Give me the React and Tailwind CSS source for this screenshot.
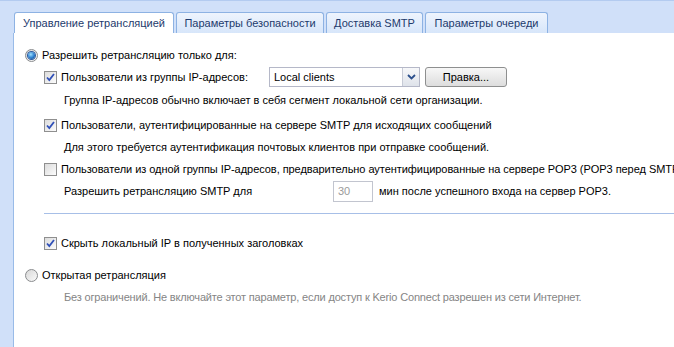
import React from "react";

const font = { fontFamily: '"Liberation Sans", Arial, sans-serif' };

const Radio = ({ checked }) => (
  <span className="relative w-[13px] h-[13px] rounded-full border border-[#8a8c8e] bg-gradient-to-br from-[#d8d8d8] to-[#fafafa] flex items-center justify-center shrink-0">
    {checked && (
      <span className="w-[7px] h-[7px] rounded-full bg-[radial-gradient(circle_at_40%_35%,#9fe0ff,#2b7fd0_55%,#0d3a78)] shadow-[0_0_0_1px_#2c5aa0]" />
    )}
  </span>
);

const Check = ({ checked }) => (
  <span className="w-[13px] h-[13px] border border-[#8f8f8f] bg-gradient-to-br from-[#dcdcdc] to-[#fcfcfc] flex items-center justify-center shrink-0">
    {checked && (
      <svg width="9" height="9" viewBox="0 0 9 9">
        <path d="M1 4.5 L3.3 7 L8 1" fill="none" stroke="#3050b8" strokeWidth="1.8" />
      </svg>
    )}
  </span>
);

const tabs = [
  { label: "Управление ретрансляцией", w: "w-[160px]", active: true },
  { label: "Параметры безопасности", w: "w-[148px]" },
  { label: "Доставка SMTP", w: "w-[97px]" },
  { label: "Параметры очереди", w: "w-[123px]" },
];

export default function App() {
  return (
    <div
      className="w-[674px] h-[347px] overflow-hidden bg-[#d0e0f9] border-t border-[#b3cbf0] pt-[11px] pl-[13px] flex flex-col text-[11px] text-black"
      style={font}
    >
      <div className="flex items-end gap-[2px] pl-[1px] h-[21px]">
        {tabs.map((t) => (
          <div
            key={t.label}
            className={`${t.w} h-[21px] rounded-t-[3px] border border-b-0 border-[#8db2e3] flex items-center justify-center text-[#1d3a6c] ${
              t.active ? "bg-white" : "bg-gradient-to-b from-[#eef4fd] to-[#d7e6fa]"
            }`}
          >
            {t.label}
          </div>
        ))}
      </div>

      <div className="flex-1 bg-white border-l border-[#99bbe8] pt-[13px]">
        <div className="h-[18px] flex items-center pl-[11px] gap-[4px]">
          <Radio checked />
          <span>Разрешить ретрансляцию только для:</span>
        </div>

        <div className="mt-[1px] h-[24px] flex items-center pl-[30px]">
          <Check checked />
          <span className="ml-[4px] w-[208px]">Пользователи из группы IP-адресов:</span>
          <div className="w-[151px] h-[20px] border border-[#b5b8c8] flex items-center">
            <span className="flex-1 pl-[4px]">Local clients</span>
            <span className="w-[17px] h-full border-l border-[#c7cbd6] bg-gradient-to-b from-[#f7f8fa] to-[#dfe3ea] flex items-center justify-center">
              <svg width="9" height="6" viewBox="0 0 9 6">
                <path d="M1 1 L4.5 4.5 L8 1" fill="none" stroke="#2b4f8c" strokeWidth="1.8" />
              </svg>
            </span>
          </div>
          <button className="ml-[5px] w-[82px] h-[20px] rounded-[3px] border border-[#8e8f8f] bg-gradient-to-b from-[#f7f7f7] to-[#dddddd] text-black">
            Правка...
          </button>
        </div>

        <div className="h-[22px] flex items-center pl-[50px]">
          Группа IP-адресов обычно включает в себя сегмент локальной сети организации.
        </div>

        <div className="mt-[3px] h-[22px] flex items-center pl-[30px] gap-[4px]">
          <Check checked />
          <span>Пользователи, аутентифицированные на сервере SMTP для исходящих сообщений</span>
        </div>

        <div className="h-[22px] flex items-center pl-[50px]">
          Для этого требуется аутентификация почтовых клиентов при отправке сообщений.
        </div>

        <div className="h-[22px] flex items-center pl-[30px] gap-[4px] whitespace-nowrap tracking-[-0.05px]">
          <Check />
          <span>
            Пользователи из одной группы IP-адресов, предварительно аутентифицированные на сервере POP3 (POP3 перед SMTP)
          </span>
        </div>

        <div className="h-[22px] flex items-center pl-[50px]">
          <span className="w-[269px]">Разрешить ретрансляцию SMTP для</span>
          <div className="w-[40px] h-[21px] border border-[#c2c5cf] flex items-center pl-[4px] text-[#9a9a9a]">
            30
          </div>
          <span className="ml-[6px]">мин после успешного входа на сервер POP3.</span>
        </div>

        <div className="mt-[11px] ml-[30px] h-px bg-[#a7bfe7]" />

        <div className="mt-[18px] h-[22px] flex items-center pl-[30px] gap-[4px]">
          <Check checked />
          <span>Скрыть локальный IP в полученных заголовках</span>
        </div>

        <div className="mt-[10px] h-[22px] flex items-center pl-[11px] gap-[4px]">
          <Radio />
          <span>Открытая ретрансляция</span>
        </div>

        <div className="h-[22px] flex items-center pl-[50px] text-[#858585] tracking-[-0.17px]">
          Без ограничений. Не включайте этот параметр, если доступ к Kerio Connect разрешен из сети Интернет.
        </div>
      </div>
    </div>
  );
}
